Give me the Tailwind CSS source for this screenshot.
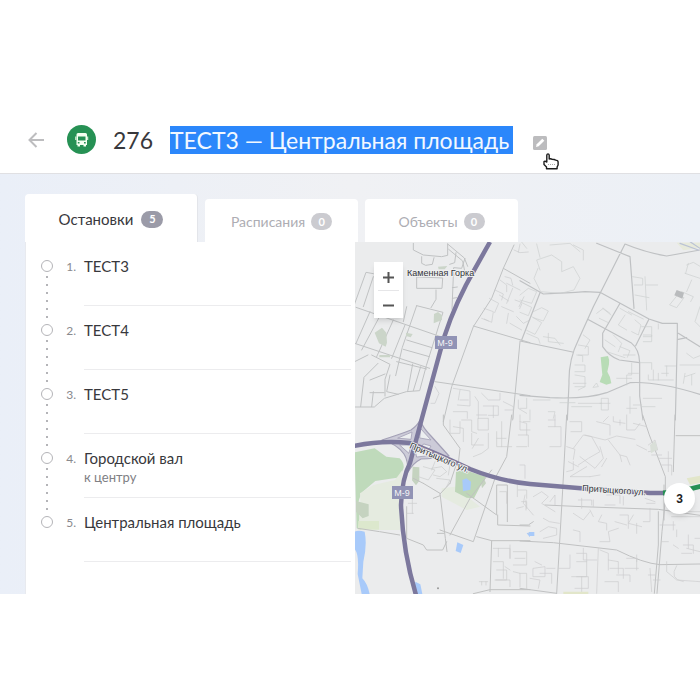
<!DOCTYPE html>
<html lang="ru">
<head>
<meta charset="utf-8">
<meta name="viewport" content="width=device-width, initial-scale=1">
<title>Маршрут 276</title>
<script src="https://cdn.jsdelivr.net/npm/@tailwindcss/browser@4"></script>
</head>
<body class="bg-white pt-28 font-['Lato','Noto_Sans',sans-serif] text-[#38383c]">
<header class="relative flex h-[62px] items-center border-b border-[#e0e0e3] bg-white pb-[6px] pl-7">
  <button type="button" aria-label="Назад" class="mr-[23px] flex size-4 items-center justify-center">
    <svg class="h-4 w-4 shrink-0" viewBox="0 0 16 16" fill="none" stroke="#bdbdbf" stroke-width="2"><path d="M16 8H2M8.500 1 1.500 8l7 7"/></svg>
  </button>
  <svg class="mr-[17px] size-[29px] shrink-0" viewBox="0 0 29 29" aria-hidden="true">
    <circle cx="14.500" cy="14.500" r="14.500" fill="#269154"/>
    <path fill="#f4fff0" fill-rule="evenodd" d="M11 8h7.500q1.500 0 1.500 1.500V20h-1V21.500h-2.500V20h-3.500V21.500H10.500V20h-1V9.500Q9.500 8 11 8ZM11 11.500v4h7.500v-4ZM10.800 17v1.500h1.700v-1.500ZM17 17v1.500h1.700v-1.500Z"/>
    <path fill="#f4fff0" d="M8.300 11.500h1v3.500h-1ZM20.200 11.500h1v3.500h-1Z"/>
  </svg>
  <h1 class="flex items-center gap-[17px] text-[23px] leading-7 whitespace-nowrap"><span>276</span><span class="bg-[#2b87fb] pr-1 text-[#f2f8ff]">ТЕСТ3 — Центральная площадь</span></h1>
  <button type="button" aria-label="Редактировать" class="relative mt-[6px] ml-5 size-[14px]">
    <svg class="size-[14px]" viewBox="0 0 14 14"><rect width="14" height="14" rx="1.500" fill="#bcbcbe"/><path d="m3 11 .7-2.700L9.300 2.700l2 2L5.700 10.300Z" fill="#fff"/></svg>
    <svg class="absolute top-[17px] left-[10px] h-[17px] w-4" viewBox="0 0 16 17" fill="#fff" stroke="#1c1c1c" stroke-width="1.400" stroke-linejoin="round"><path d="M3.800 9V2.200Q4 .9 5 .9T6.200 2.200V6l1-.3 2 .5 2 .3 1.500.6 1.800.5.6 1.200V12l-1 2v1.800H3.500V14L1 11.500V8.600l1-.5Z"/><path d="M5 11.500h8" stroke="#aaa" stroke-width="1" stroke-dasharray="1 1"/></svg>
  </button>
</header>
<main class="bg-linear-to-r from-[#eaeff8] via-[#f0f1f4] to-[#ecf0f6] pt-5 pl-[25px]">
  <nav class="flex items-end gap-[7px]" aria-label="Разделы маршрута">
    <button type="button" class="flex h-12 w-[173px] items-center justify-center gap-2 rounded-t-sm border-r border-[#e3e5ea] bg-white pt-[3px] text-[15px]">Остановки<span class="flex h-[17px] w-[22px] items-center justify-center rounded-full bg-[#9b9ba8] text-[11px] font-bold text-white">5</span></button>
    <button type="button" class="flex h-[43px] w-[153px] items-center justify-center gap-[6px] rounded-t-sm bg-white pt-[2px] text-sm text-[#adadb3]">Расписания<span class="flex h-[17px] w-[21px] items-center justify-center rounded-full bg-[#cbcbd0] text-[11px] font-bold text-white">0</span></button>
    <button type="button" class="flex h-[43px] w-[153px] items-center justify-center gap-[6px] rounded-t-sm bg-white pt-[2px] text-sm text-[#adadb3]">Объекты<span class="flex h-[17px] w-[21px] items-center justify-center rounded-full bg-[#cbcbd0] text-[11px] font-bold text-white">0</span></button>
  </nav>
  <div class="flex">
    <section class="w-[330px] shrink-0 border-l border-[#e8eaef] bg-white pr-1 pb-8" aria-label="Остановки">
      <ol>
        <li class="flex h-16">
          <svg class="ml-[15px] h-16 w-3 shrink-0 overflow-visible" viewBox="0 0 12 64" fill="none" stroke="#b4b4b8"><circle cx="6" cy="24" r="5.500"/><path d="M6 34V80" stroke-width="2" stroke-dasharray="2 6"/></svg>
          <span class="w-7 pt-[17px] pr-[5px] text-right text-xs leading-4 text-[#89898d]">1.</span>
          <div class="ml-[3px] flex-1 border-b border-[#ececee] pt-[14px]"><p class="text-[15px] leading-5">ТЕСТ3</p></div>
        </li>
        <li class="flex h-16">
          <svg class="ml-[15px] h-16 w-3 shrink-0 overflow-visible" viewBox="0 0 12 64" fill="none" stroke="#b4b4b8"><circle cx="6" cy="24" r="5.500"/><path d="M6 34V80" stroke-width="2" stroke-dasharray="2 6"/></svg>
          <span class="w-7 pt-[17px] pr-[5px] text-right text-xs leading-4 text-[#89898d]">2.</span>
          <div class="ml-[3px] flex-1 border-b border-[#ececee] pt-[14px]"><p class="text-[15px] leading-5">ТЕСТ4</p></div>
        </li>
        <li class="flex h-16">
          <svg class="ml-[15px] h-16 w-3 shrink-0 overflow-visible" viewBox="0 0 12 64" fill="none" stroke="#b4b4b8"><circle cx="6" cy="24" r="5.500"/><path d="M6 34V80" stroke-width="2" stroke-dasharray="2 6"/></svg>
          <span class="w-7 pt-[17px] pr-[5px] text-right text-xs leading-4 text-[#89898d]">3.</span>
          <div class="ml-[3px] flex-1 border-b border-[#ececee] pt-[14px]"><p class="text-[15px] leading-5">ТЕСТ5</p></div>
        </li>
        <li class="flex h-16">
          <svg class="ml-[15px] h-16 w-3 shrink-0 overflow-visible" viewBox="0 0 12 64" fill="none" stroke="#b4b4b8"><circle cx="6" cy="24" r="5.500"/><path d="M6 34V80" stroke-width="2" stroke-dasharray="2 6"/></svg>
          <span class="w-7 pt-[17px] pr-[5px] text-right text-xs leading-4 text-[#89898d]">4.</span>
          <div class="ml-[3px] flex-1 border-b border-[#ececee] pt-[14px]"><p class="text-[15px] leading-5">Городской вал</p><p class="text-[13px] leading-[18px] text-[#808084]">к центру</p></div>
        </li>
        <li class="flex h-16">
          <svg class="ml-[15px] h-16 w-3 shrink-0" viewBox="0 0 12 64" fill="none" stroke="#b4b4b8"><circle cx="6" cy="24" r="5.500"/></svg>
          <span class="w-7 pt-[17px] pr-[5px] text-right text-xs leading-4 text-[#89898d]">5.</span>
          <div class="ml-[3px] flex-1 border-b border-[#ececee] pt-[14px]"><p class="text-[15px] leading-5">Центральная площадь</p></div>
        </li>
      </ol>
    </section>
    <section class="relative min-w-0 flex-1 overflow-hidden bg-[#ebeced]" aria-label="Карта">
      <svg class="absolute inset-0 h-full w-full" viewBox="355 242 345 352" preserveAspectRatio="xMinYMin slice" fill="none" stroke-linecap="round" stroke-linejoin="round">
        <!-- north-west quarter -->
        <g transform="translate(350 240) scale(.33333)" stroke="#c0c2c3" stroke-width="3">
          <path d="M190 10v20l30 15 55 5 18-4V12M215 50v20l12 6 20-3 5-20M293 12l50 42 10 25M296 28l42 35 6 30M318 38l-4 30-15 5M345 55l-10 30-24-2-5 125M305 105h28M307 143l15-2M307 175l13-2M200 112v33h76l2-30ZM258 150v28l-15 25M200 197l79 20-50 160-20 75-40 3-66 20-30 26H14M200 197l-43 125-20 85M70 101l-22-4-34 94M18 202l265 92M130 240 80 350M95 218 35 330M60 215 18 310M14 310l225 75M165 255l-40 100M160 328l78 22M170 300l76 23M140 365l90 22M188 372l-15 82M212 380l-22 72M65 345l55 28-15 45v50M84 370l-42 42-10 88M60 420l45-18M70 455l-5 45M60 458h42M14 365l40-20M120 405l-10 50 35 8M120 165 100 210M70 110 40 200M170 200l-10 45"/>
          <path d="M492 15l-32 70-35 90-55 85-65 180-25 105M370 258l170 50M510 305l-22 235M255 425l285 42M460 85l80 45"/>
          <path stroke-width="2" stroke="#cacccd" d="M492 30l18 8 25-2M510 12l-5 25M465 110l18 5 5 20M450 120l20 15v20M435 150l25 12-5 18M418 175l28 15-12 28M402 205l28 10-5 32-22-10M470 130l40 20M488 145l-18 45M495 180l22 8-8 18M455 200l35 15M475 220l-5 30M500 230l20 20 20-10M448 165l28 18M480 250l35 20M522 170l-15 30M395 235l20 8M310 445l50 8v45l-38-3M330 450l-5 30M330 480h25M310 515h42v20M375 470l10 15v50M395 460l20 20h35v-20M400 498h45v28h-30M430 498v35M460 485l30 15v35M505 480v25l25 15M255 440l12 20-12 30h-12M380 525h30M465 510h25"/>
          <path fill="#cbd5c9" stroke="none" d="M74 278l22-15 13 15 2 30-4 12-20-10ZM252 222l12-6 12 10v14l-25 10ZM88 345h32v7H88ZM168 278l20 4-6 10-14-4ZM264 80l28-2-8 10h-18Z"/>
        </g>
        <!-- north-east quarter -->
        <g transform="translate(520 240) scale(.33333)" stroke="#bfc1c3" stroke-width="3.500">
          <path d="M0 122l70 40q70-3 125-7l45 2 147 80 40 13h45v40L466 540M315 12 220 200l-45 100q-30 60-28 130l-5 110M230 10l100 40 12 155M315 12q60 25 125 36l100-18M0 303l158 33M60 158 5 300M0 466l90 7q110 5 170-15l70-30q80-5 210 35M203 238l130 70q25 20 26 60v100l10 72M300 190l-52 90v40q20 30 50 40l60 8M387 237l-40 80M475 280l65 40M475 298l25-5"/>
          <path stroke-width="2" stroke="#cccecf" d="M60 90l-10-30 45-15 30 20v30l35-15 20 35-18 35-40 10-60-5-20-40 12-30M50 12l10 40M0 0l20 25M90 15l60-5 30 25M160 15l30 15v30M338 110l30 5v20h-25M375 110l5 100M378 135h35M345 165l42 8M515 120l-15 35M500 75l20-8 20 12M495 100l45 15M505 70l-8 30M450 195l20 8 22-30-18-8ZM485 155l35 15-8 15M540 200l-15 45 15 15M0 165l25-20 25 10-15 35-35-10M10 190l25 12-10 25-25-10M40 215l25-12 20 10-15 30-30-10M35 230l30 18-20 35-25-12M20 280l35 15 5 15M70 290l35 5 15 20M85 280v25l45 5M230 220l20-15 20 15M238 235l25 12M248 205l25 20M300 205l35 20M325 215l45 22M315 225l-20 30 25 15M345 240l18 15-8 30-20-10M365 260h30v30h-25M370 285h25v20h-25M280 285l25 25-10 25M300 320l30 12-8 20M255 300l30 20M260 335l55 18M310 345h35M190 285l20 15-15 25M175 315l30 5v25h-30M170 345l18 2v18M165 375h30v20h-30M165 405l30 5v30h-30M160 430h38M155 500h60M175 450l20-10M230 430l5 10-15 2ZM245 475h20v35h-20ZM240 490h30M175 490h70M335 370v35h-15v30M360 368h35v20M325 400h30M290 415h45M385 405v15h75M400 390v30M415 400v20M435 378h32M440 378v30M425 400h20M415 252v15M495 410l30-10M490 430l5-30M515 405v30M500 340l20 15 20-8M480 375h60M370 475h55M330 470v50M340 495h25M365 500h40M320 505h30M20 475v30H0M30 510v30M85 515h20l-5 20M40 480h50M120 488h45"/>
          <path fill="#b8dcb6" stroke="none" d="M242 352l22-4q6 14 3 25l-5 22q10 15 12 35l-15 4-20-8 8-22Z"/>
          <path fill="#b9bbbd" stroke="none" d="M470 150l22 8-5 18-24-10Z"/>
          <path fill="#e7eadb" stroke="none" d="M470 8h70v15l-50 8Z"/><path stroke="#bac2d5" d="M480 10l55 20M510 5l30 20"/>
        </g>
        <!-- south-west quarter -->
        <g transform="translate(350 415) scale(.33333)" stroke="#c0c1c1" stroke-width="3">
          <path stroke="none" fill="#bfdabb" d="M14 112l60-12 35 25 40 5q14 14 12 28-6 20-20 30l-65 10-38 32q-14 22-14 45l10 70-14-5Z"/>
          <path stroke="none" fill="#e5ebe0" d="M30 235l40-25 65-15 22-30-5 95L150 345H80l-56-5 8-60ZM275 220l40-5 75 60-40 10-75-40Z"/>
          <path stroke="none" fill="#c5d3c0" d="M18 258l38 10v35l-18 7-20-20ZM188 155l20 2v40l-10 14-12-15ZM390 190l10-5 8 20-12 15Z"/>
          <path stroke="none" fill="#bed6b8" d="M318 170l25-5 65 20-18 30-18 35-22-2-35-18Z"/>
          <path stroke="none" fill="#dce8cd" d="M25 318h62v26H25Z"/>
          <path stroke="none" fill="#a8cafa" d="M14 350q10-5 30 0 8 40-4 90l-3 50q15 15 22 47H35l-12-60q5-60-9-75ZM196 500l15 8 6 29h-25ZM337 195l12-5 14 10-2 24-22 5ZM322 382l18 8-8 24-15-6ZM530 355l10-3v15Z"/>
          <path d="M280 0v30l50 70-5 45M485 0l-15 125-35 65-65 190-100-35M220 205l50 30 16 135 5 40M300 205l-30 32M300 360l60-110 65-85M350 235l90 65v-90h32v110M443 300v30l97 3M24 340l65 10 60 10M170 275v95l50 20 10 15h48l12-25M380 365l45 12h115M425 377l-5 153M370 536l50-12h120M262 355h20M250 250l20-8M190 190l30 15M300 205l20-60"/>
          <path stroke-width="2" stroke="#cacbcb" d="M220 155l35 10-20 30-30-10M245 160l30-5 15 15-20 15-20-5M260 190l40 5-10 20M255 140l-10 25M275 140l25 10-5 30M300 15v40h30V20M310 35l30 5v40M335 15h30v35l15 5M385 10h30v35h-30ZM365 55v35h35M415 55v45l-20 15-25 10M385 70l-18 30M440 50v45h45M455 20v75M440 70h28M510 0v45h30M520 20h20M505 60h30v35M500 95h30M165 250h22v45M175 265h25M170 295h20M502 200v45M505 225h25v25M528 255v30M450 230h20v35M500 280l20-5M515 260h15v20M430 400h50v30M445 400v25M430 440h30v50M440 465h30v30h-32M435 495h45v20M480 390v40M490 410h40v40h-40M495 430h30M490 470l20 5v40M510 475h20v45M388 500h25M395 500v10M408 500v10M465 455l15 10"/>
          <circle cx="264" cy="520" r="3" fill="#999" stroke="none"/>
        </g>
        <!-- south-east quarter -->
        <g transform="translate(520 415) scale(.33333)" stroke="#c0c1c2" stroke-width="3">
          <path d="M140 0 128 225 110 535M465 0l-5 170M468 62h72M368 0l20 60 48 125v70l-10 95-15 185M75 270l110 5 230 8 125 18M0 378l100 5 190 22q80 40 130 44l120-2M0 330h25l15-10M415 290v100l-12 145M0 520l110 15M432 210v105"/>
          <path stroke-width="2" stroke="#cbcccd" d="M85 35h38v60H90M105 35V0M85 15h20M0 20l20 5v35M0 150h15v40M150 20h35v30h-32M140 95l25 8-5 30M160 100l30-40 25 5 25 45-35 20-30 20M195 60l60 15 35-12 55 10M180 125l45 35 25-30-10-35M245 155l15-25M265 75l35 45 5 20M300 120l20 5 10 25M160 140v25l-20 5M175 155l-30-15M200 155l-50 30h60M210 185l30-5M280 5v15l35 5M320 0v45h25l15-20M340 25l40 10M230 20l40 10v30M250 20l15-15M300 30v-15M350 90l30 15M385 90l20-15 8 30-28 5M395 120h30M415 130h40M425 150h30v30M445 110v60M15 240l-5 25 30 35M40 245l25-15 20 15-20 20 40 25M90 260l15-20v30M70 310l18 10 30 5M60 350l25-15 25 5v20l-40 10M25 355h15M160 295l30 20 20-25M185 280v-30M175 255h40v15M220 255v20M255 270h30M260 240h40v25M310 245v25M245 300l-10 20 25 5v20M210 285l10 20M300 300h25v40M285 320l35 10M340 300l-15 25 40 10M350 325v30M160 345l20 5v30M240 380h30l-5-30 30-10M390 280v40h-20M375 250l30 10M380 265h25M420 330h45M455 290h85M455 305h85M460 320v25M470 345v20M240 405l25 10v50M190 400v35h40M235 400l-5 135M170 415h30v70h-30M170 440h30M150 420v40h-35M40 460l35-5v30H40ZM30 490l30 5-5 25M45 440l20 10M80 460h25M60 475h35v30M155 485h50v35h-40M185 485v45M265 435l30 5v35M270 460h40v30M290 480h40v20M255 500h40v30M320 430h30v35M315 460h40M350 420v20M390 460l5 70M385 480h20M400 495h20M440 440v30l30 25 70 5M470 452q-25 40 20 48M500 400l40 10M490 390h30v25M485 415h30M505 360v40M525 370h15M460 390l15 10M425 380h20"/>
          <path stroke="none" fill="#a8cafa" d="M27 351h16v12H27Z"/>
          <path stroke="none" fill="#e2e6ca" d="M500 190l40-8v22l-30 5ZM130 530h75v8h-75Z"/>
          <path stroke="none" fill="#d9dfd8" d="M390 90l15-12 8 25-20 12Z"/>
        </g>
        <!-- interchange -->
        <g stroke="#a3a0b6" stroke-width="1.200">
          <path fill="#cccbd8" d="M382 440Q401 434 411 430Q418 425 420 420Q423 428 431 436L449 456Q433 459 421 459Q413 463 408 472Q408 460 404 454Q397 444 382 440Z"/>
          <path fill="#eceef0" stroke-width=".8" d="M398 438l14-6-1 7ZM421 429l10 11-11-2ZM415 449l20 6-18 2ZM400 445l11 0-2 8ZM424 444l7 2-3 5-8-2Z"/>
        </g>
        <!-- highways -->
        <path stroke="#7c789d" stroke-width="4.500" stroke-linecap="butt" d="M490 242Q478 263 466 285Q448 320 440 352Q429 392 422 418L410 463Q402 478 401 505Q403 552 416 595"/>
        <path stroke="#7c789d" stroke-width="4.500" stroke-linecap="butt" d="M354 446Q382 440 410 443Q432 451 470 469Q500 481 530 484L590 489L650 493H672"/>
        <path stroke="#269154" stroke-width="5" stroke-linecap="butt" d="M663 493Q680 492 702 486"/>
        <g fill="#9193b5"><rect x="435" y="336" width="22" height="13"/><rect x="392" y="486" width="21" height="13"/></g>
        <g stroke="none" fill="#f5f5f7" font-family="Liberation Sans, sans-serif" font-size="9" text-anchor="middle"><text x="445" y="346">М-9</text><text x="402" y="496">М-9</text></g>
        <g fill="#333539" stroke="#eff0f1" stroke-width="2" paint-order="stroke" font-family="Liberation Sans, sans-serif" font-size="9">
          <text x="407" y="276">Каменная Горка</text>
          <text transform="translate(409 448) rotate(23)">Притыцкого ул.</text>
          <text transform="translate(582 491) rotate(4)">Притыцкого ул.</text>
        </g>
      </svg>
      <div class="absolute top-5 left-[19px] flex w-[29px] flex-col bg-white shadow-md">
        <button type="button" aria-label="Приблизить" class="flex h-7 items-center justify-center pt-[2px]"><svg class="size-[11px]" viewBox="0 0 11 11" stroke="#555" stroke-width="2"><path d="M0 5.500h11M5.500 0v11"/></svg></button>
        <button type="button" aria-label="Отдалить" class="mx-1 flex h-7 items-center justify-center border-t border-[#e6e6e8] pt-[2px]"><svg class="size-[11px]" viewBox="0 0 11 11" stroke="#555" stroke-width="2"><path d="M0 5.500h11"/></svg></button>
      </div>
      <button type="button" class="absolute top-[241px] left-[309px] flex size-[31px] items-center justify-center rounded-full bg-white font-['Liberation_Sans',sans-serif] text-xs font-bold text-[#222] shadow-md">3</button>
    </section>
  </div>
</main>
</body>
</html>
